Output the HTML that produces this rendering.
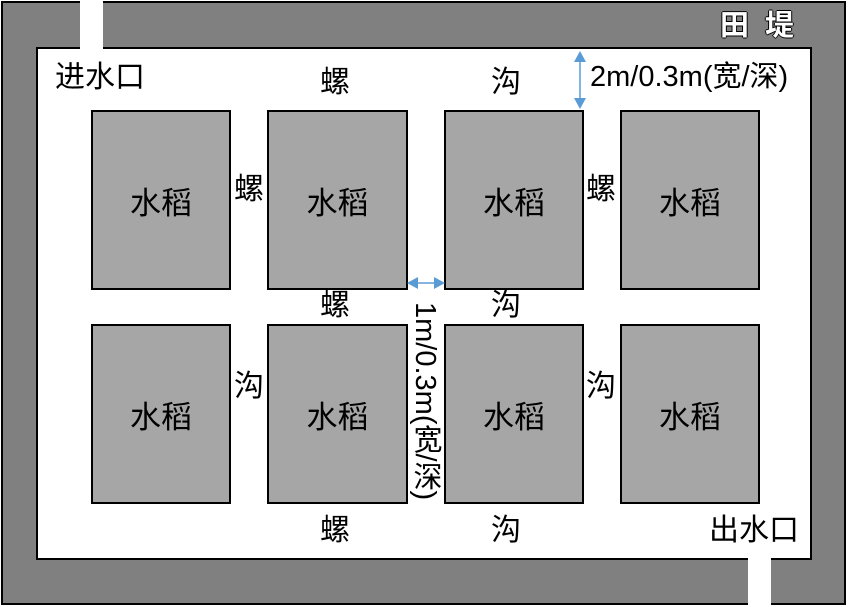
<!DOCTYPE html>
<html><head><meta charset="utf-8"><style>
body{margin:0;width:848px;height:607px;overflow:hidden;background:#fff;font-family:"Liberation Sans","Noto Sans CJK SC",sans-serif;}
.a{position:absolute}
.box{position:absolute;background:#a6a6a6;border:2px solid #000;box-sizing:border-box;display:flex;align-items:center;justify-content:center;font-size:31px;color:#000}
.t{position:absolute;font-size:30px;color:#000;line-height:1;white-space:nowrap}
</style></head><body>
<div class="a" style="left:1px;top:1px;width:845px;height:604px;background:#808080;border:2px solid #000;box-sizing:border-box"></div>
<div class="a" style="left:36px;top:47px;width:776px;height:513px;background:#fff;border:2px solid #000;box-sizing:border-box"></div>
<div class="a" style="left:80px;top:0;width:23px;height:51px;background:#fff"></div>
<div class="a" style="left:748px;top:556px;width:23px;height:51px;background:#fff"></div>
<div class="t" style="left:720px;top:12px;color:#fff;font-size:29px;font-weight:bold;text-shadow:-1px 0 #000,1px 0 #000,0 -1px #000,0 1px #000">田</div>
<div class="t" style="left:765px;top:12px;color:#fff;font-size:29px;font-weight:bold;text-shadow:-1px 0 #000,1px 0 #000,0 -1px #000,0 1px #000">堤</div>
<div class="t" style="left:55px;top:63px">进水口</div>
<div class="t" style="left:709px;top:516px">出水口</div>
<div class="box" style="left:91px;top:110px;width:140px;height:180px">水稻</div>
<div class="box" style="left:267px;top:110px;width:141px;height:180px">水稻</div>
<div class="box" style="left:444px;top:110px;width:140px;height:180px">水稻</div>
<div class="box" style="left:620px;top:110px;width:140px;height:180px">水稻</div>
<div class="box" style="left:91px;top:324px;width:140px;height:180px">水稻</div>
<div class="box" style="left:267px;top:324px;width:141px;height:180px">水稻</div>
<div class="box" style="left:444px;top:324px;width:140px;height:180px">水稻</div>
<div class="box" style="left:620px;top:324px;width:140px;height:180px">水稻</div>
<div class="t" style="left:320px;top:68px">螺</div>
<div class="t" style="left:491px;top:68px">沟</div>
<div class="t" style="left:234px;top:175px">螺</div>
<div class="t" style="left:586px;top:175px">螺</div>
<div class="t" style="left:320px;top:291px">螺</div>
<div class="t" style="left:491px;top:291px">沟</div>
<div class="t" style="left:234px;top:372px">沟</div>
<div class="t" style="left:586px;top:372px">沟</div>
<div class="t" style="left:320px;top:516px">螺</div>
<div class="t" style="left:491px;top:516px">沟</div>
<div class="t" style="left:590px;top:63px;font-size:29px">2m/0.3m(宽/深)</div>
<div class="t" style="left:410px;top:302px;font-size:29px;writing-mode:vertical-rl">1m/0.3m(宽/深)</div>
<svg class="a" style="left:0;top:0" width="848" height="607">
<g fill="#5b9bd5" stroke="#5b9bd5">
<line x1="580" y1="56" x2="580" y2="104" stroke-width="1.5"/>
<polygon points="574,62 586,62 580,51" stroke="none"/>
<polygon points="574,98 586,98 580,109" stroke="none"/>
<line x1="412" y1="283" x2="440" y2="283" stroke-width="1.5"/>
<polygon points="407,283 418,277 418,289" stroke="none"/>
<polygon points="445,283 434,277 434,289" stroke="none"/>
</g></svg>
</body></html>
